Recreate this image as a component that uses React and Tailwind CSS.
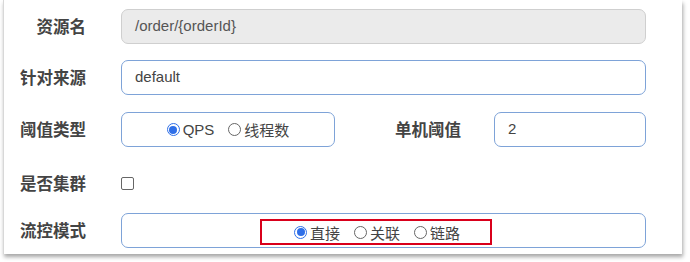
import React from "react";

const CJK = { fontFamily: '"Noto Sans CJK SC", "Noto Sans", sans-serif' };
const TXT = { fontFamily: '"Liberation Sans", "Noto Sans CJK SC", sans-serif' };

function Radio({ checked, label }) {
  return (
    <span className="inline-flex items-center">
      {checked ? (
        <span className="w-[13px] h-[13px] rounded-full border border-[#2f6fe8] flex items-center justify-center bg-white">
          <span className="w-[8px] h-[8px] rounded-full bg-[#2f6fe8]" />
        </span>
      ) : (
        <span className="w-[13px] h-[13px] rounded-full border border-[#666] bg-white" />
      )}
      <span className="ml-[3px] text-[15px] text-[#444] leading-none" style={label.match(/[A-Z]/) ? TXT : CJK}>
        {label}
      </span>
    </span>
  );
}

function Label({ children, className = "" }) {
  return (
    <div className={"text-right text-[16.5px] font-bold text-[#444] leading-none " + className} style={CJK}>
      {children}
    </div>
  );
}

export default function App() {
  return (
    <div className="w-[690px] h-[262px] bg-white overflow-hidden">
      <div className="ml-[3px] w-[679px] h-[254px] bg-white border-l border-[#d8d8d8] shadow-[1px_3px_4px_rgba(0,0,0,0.35)] pt-[9px]">
        {/* Row 1 */}
        <div className="flex items-center h-[35px]">
          <Label className="w-[82px]">资源名</Label>
          <div
            className="ml-[35px] w-[525px] h-[35px] rounded-[7px] border border-[#cfcfcf] bg-[#ebebeb] flex items-center pl-[13px] text-[15px] text-[#555]"
            style={TXT}
          >
            /order/{"{orderId}"}
          </div>
        </div>
        {/* Row 2 */}
        <div className="flex items-center h-[35px] mt-[16px]">
          <Label className="w-[82px]">针对来源</Label>
          <div
            className="ml-[35px] w-[525px] h-[35px] rounded-[7px] border border-[#7ea3d8] bg-white flex items-center pl-[13px] text-[15px] text-[#444]"
            style={TXT}
          >
            default
          </div>
        </div>
        {/* Row 3 */}
        <div className="flex items-center h-[35px] mt-[17px]">
          <Label className="w-[82px]">阈值类型</Label>
          <div className="ml-[35px] w-[214px] h-[35px] rounded-[7px] border border-[#7ea3d8] bg-white flex items-center justify-center gap-[14px]">
            <Radio checked label="QPS" />
            <Radio label="线程数" />
          </div>
          <Label className="w-[126px]">单机阈值</Label>
          <div
            className="ml-[33px] w-[152px] h-[35px] rounded-[7px] border border-[#7ea3d8] bg-white flex items-center pl-[13px] text-[15px] text-[#444]"
            style={TXT}
          >
            2
          </div>
        </div>
        {/* Row 4 */}
        <div className="flex items-center h-[35px] mt-[19px]">
          <Label className="w-[82px]">是否集群</Label>
          <div className="ml-[35px] w-[13px] h-[13px] rounded-[2px] border border-[#666] bg-white" />
        </div>
        {/* Row 5 */}
        <div className="flex items-center h-[35px] mt-[12px]">
          <Label className="w-[82px]">流控模式</Label>
          <div className="ml-[35px] w-[525px] h-[35px] rounded-[7px] border border-[#7ea3d8] bg-white flex items-center justify-center pr-[15px]">
            <div className="mt-[3px] w-[232px] h-[26px] border-2 border-[#d9001b] flex items-center pl-[32px] gap-[14px]">
              <Radio checked label="直接" />
              <Radio label="关联" />
              <Radio label="链路" />
            </div>
          </div>
        </div>
      </div>
    </div>
  );
}
